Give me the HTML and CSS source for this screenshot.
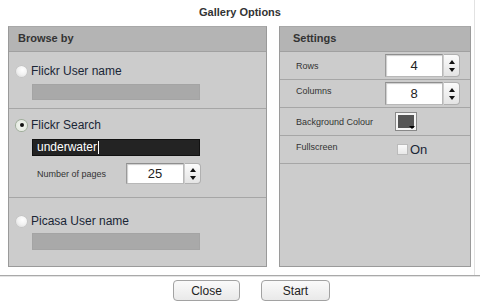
FILE: index.html
```html
<!DOCTYPE html>
<html>
<head>
<meta charset="utf-8">
<link rel="stylesheet" href="styles.css">
</head>
<body>
<div class="frame">
  <div class="title">Gallery Options</div>
  <div class="panels">
    <section class="panel browse">
      <div class="phead">Browse by</div>
      <div class="sec sec1">
        <label class="radio"><span class="dot"></span>Flickr User name</label>
        <div class="tin disabled"></div>
      </div>
      <div class="sec sec2">
        <label class="radio"><span class="dot on"></span>Flickr Search</label>
        <div class="tin dark">underwater<span class="caret"></span></div>
        <div class="numrow">
          <span class="small">Number of pages</span>
          <div class="num"><div class="nbox">25</div><div class="spin"><span class="up"></span><span class="down"></span></div></div>
        </div>
      </div>
      <div class="sec sec3">
        <label class="radio"><span class="dot"></span>Picasa User name</label>
        <div class="tin disabled"></div>
      </div>
    </section>
    <section class="panel settings">
      <div class="phead">Settings</div>
      <div class="row">
        <span class="small">Rows</span>
        <div class="num"><div class="nbox">4</div><div class="spin"><span class="up"></span><span class="down"></span></div></div>
      </div>
      <div class="row">
        <span class="small raised">Columns</span>
        <div class="num"><div class="nbox">8</div><div class="spin"><span class="up"></span><span class="down"></span></div></div>
      </div>
      <div class="row">
        <span class="small">Background Colour</span>
        <div class="swatch"><span class="tri"></span></div>
      </div>
      <div class="row">
        <span class="small raised">Fullscreen</span>
        <label class="check"><span class="box"></span>On</label>
      </div>
    </section>
  </div>
  <div class="footer">
    <button class="btn close">Close</button>
    <button class="btn start">Start</button>
  </div>
</div>
</body>
</html>
```
FILE: styles.css
```css
html, body {
  margin: 0;
  padding: 0;
  background: #fff;
}
body {
  width: 480px;
  height: 307px;
  overflow: hidden;
  font-family: "Liberation Sans", Arial, sans-serif;
  color: #1e2a38;
}
.frame {
  width: 474px;
  height: 275px;
  border-right: 1px solid #e2e2e2;
}
.title {
  height: 26px;
  line-height: 24px;
  text-align: center;
  font-weight: bold;
  font-size: 11px;
  color: #333;
  padding-left: 6px;
  box-sizing: border-box;
}
.panels {
  display: flex;
  gap: 12px;
  padding-left: 8px;
  height: 241px;
}
.panel {
  box-sizing: border-box;
  height: 241px;
  background: #cccccc;
  border: 1px solid #9a9a9a;
  border-top-color: #a8a8a8;
  display: flex;
  flex-direction: column;
}
.browse { width: 259px; }
.settings { width: 192px; }
.phead {
  height: 24px;
  line-height: 23px;
  background: #b4b4b4;
  border-bottom: 1px solid #a0a0a0;
  font-weight: bold;
  font-size: 11px;
  color: #333;
  padding-left: 9px;
  flex: none;
}
.settings .phead { padding-left: 13px; }
.sec {
  box-sizing: border-box;
  border-bottom: 1px solid #a6a6a6;
  padding-left: 7px;
  flex: none;
}
.sec1 { height: 57px; padding-top: 12px; }
.sec2 { height: 89px; padding-top: 9px; }
.sec3 { border-bottom: none; flex: 1; padding-top: 16px; }
.radio {
  display: flex;
  align-items: center;
  height: 14px;
  font-size: 12px;
  color: #1a2636;
}
.dot {
  width: 11px;
  height: 11px;
  border-radius: 50%;
  background: radial-gradient(circle at 60% 35%, #ffffff 0%, #f2f2f2 50%, #d4d4d4 100%);
  box-shadow: 0 0 0 0.5px #bdbdbd;
  margin-right: 4px;
  position: relative;
  flex: none;
}
.dot.on {
  background: radial-gradient(circle, #f4f7f2 0%, #e6ebe2 70%, #b9c4b3 100%);
  box-shadow: 0 0 0 1px #9fae9a;
}
.dot.on::after {
  content: "";
  position: absolute;
  left: 3.5px;
  top: 3.5px;
  width: 4px;
  height: 4px;
  border-radius: 50%;
  background: #111;
}
.tin {
  box-sizing: border-box;
  margin-left: 16px;
  width: 168px;
  margin-top: 6px;
  height: 16px;
}
.disabled {
  background: #a9a9a9;
  border: 1px solid #a4a4a4;
}
.sec2 .tin, .sec3 .tin { height: 17px; }
.sec2 .tin { margin-top: 7px; }
.sec3 .tin { margin-top: 5px; }
.dark {
  background: #232323;
  border: 1px solid #111;
  color: #fff;
  font-size: 12px;
  line-height: 15px;
  padding-left: 4px;
  display: flex;
  align-items: center;
}
.caret {
  display: inline-block;
  width: 1px;
  height: 13px;
  background: #fff;
  margin-left: 1px;
}
.numrow {
  display: flex;
  align-items: center;
  margin-top: 7px;
  padding-left: 21px;
  height: 21px;
}
.small {
  font-size: 9px;
  color: #333;
}
.numrow .small { width: 89px; }
.num {
  display: flex;
  height: 21px;
}
.nbox {
  box-sizing: border-box;
  width: 58px;
  height: 100%;
  background: #fff;
  border: 1px solid #b8b8b8;
  border-top-color: #8e8e8e;
  border-left-color: #9a9a9a;
  box-shadow: inset 1px 1px 1px #ccc;
  font-size: 13px;
  color: #222;
  text-align: center;
  line-height: 19px;
}
.spin {
  box-sizing: border-box;
  width: 16px;
  height: 100%;
  margin-left: 1px;
  border: 1px solid #b0b0b0;
  border-left: none;
  border-radius: 0 4px 4px 0;
  background: linear-gradient(#fbfbfb, #e4e4e4);
  display: flex;
  flex-direction: column;
  align-items: center;
  justify-content: center;
  gap: 4px;
}
.up, .down {
  width: 0;
  height: 0;
  border-left: 3px solid transparent;
  border-right: 3px solid transparent;
}
.up { border-bottom: 4px solid #111; }
.down { border-top: 4px solid #111; }
.row {
  box-sizing: border-box;
  height: 28px;
  border-bottom: 1px solid #a6a6a6;
  display: flex;
  align-items: center;
  padding-left: 16px;
  flex: none;
}
.row .small { width: 89px; flex: none; }
.row .small.raised { margin-top: -5px; }
.row .num { height: 23px; }
.row .nbox { line-height: 21px; }
.swatch {
  box-sizing: border-box;
  margin-left: 11px;
  width: 20px;
  height: 17px;
  background: #555;
  border: 2px solid #f4f4f4;
  box-shadow: 0 0 0 1px #888;
  position: relative;
}
.tri {
  position: absolute;
  right: -1px;
  bottom: -1px;
  width: 0;
  height: 0;
  border-left: 3px solid transparent;
  border-right: 3px solid transparent;
  border-top: 3px solid #000;
}
.check {
  display: flex;
  align-items: center;
  margin-left: 12px;
  font-size: 13px;
  color: #1a2636;
}
.box {
  box-sizing: border-box;
  width: 11px;
  height: 11px;
  background: linear-gradient(#fafafa, #e8e8e8);
  border: 1px solid #bbb;
  margin-right: 2px;
}
.footer {
  margin-top: 8px;
  width: 480px;
  height: 32px;
  box-sizing: border-box;
  border-top: 1px solid #a9a9a9;
  box-shadow: inset 0 1px 0 #e4e4e4;
  display: flex;
  padding-top: 4px;
  padding-left: 173px;
  gap: 21px;
}
.btn {
  box-sizing: border-box;
  width: 67px;
  height: 21px;
  border: 1px solid #a2a2a2;
  border-radius: 4px;
  background: linear-gradient(#fafafa, #e9e9e9);
  font-family: "Liberation Sans", Arial, sans-serif;
  font-size: 12px;
  color: #222;
  padding: 0;
}
.start { width: 69px; }
```
